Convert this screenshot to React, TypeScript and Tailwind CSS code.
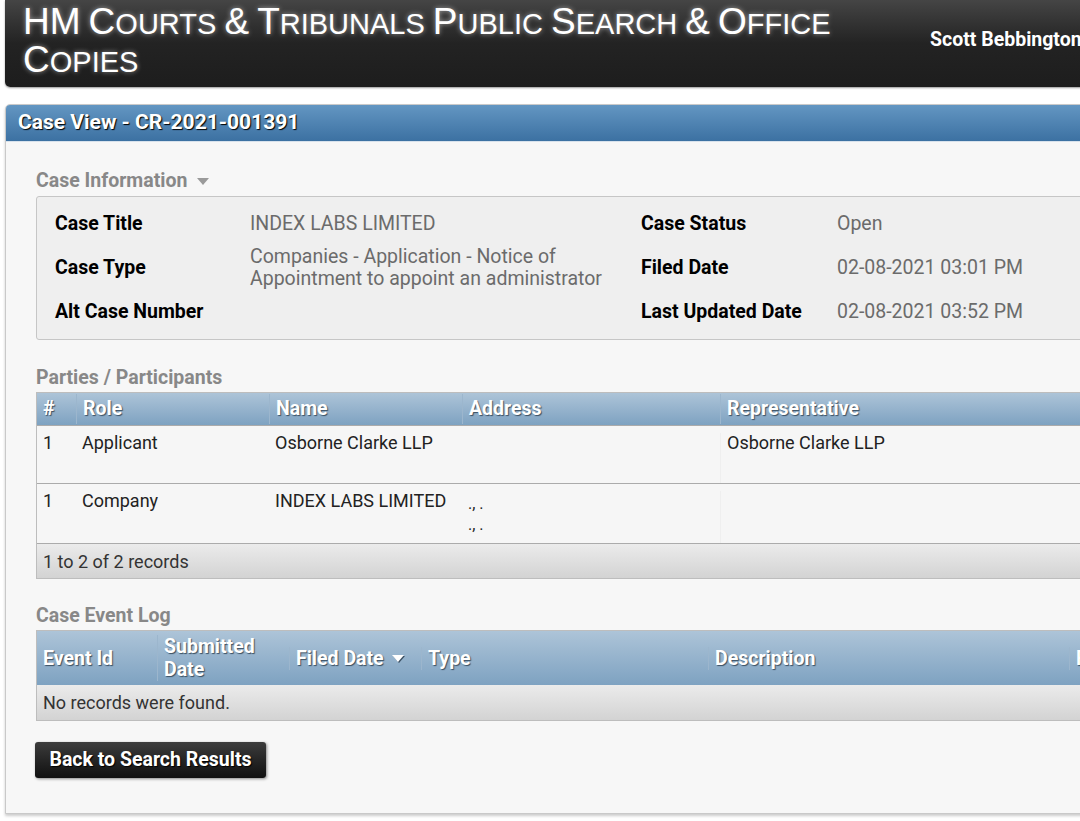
import React from 'react'

const roboto = "font-['Roboto',sans-serif]"

// banner title words, rendered in small caps by hand: first letter big, rest smaller
const titleWords = ['HM', 'Courts', '&', 'Tribunals', 'Public', 'Search', '&', 'Office', 'Copies']

function CapsWord({ word }: { word: string }) {
  if (word === 'HM' || word === '&') return <span className="text-[37px] leading-[35px]">{word}</span>
  return (
    <span>
      <span className="text-[37px] leading-[35px]">{word[0].toUpperCase()}</span>
      <span className="text-[29px] leading-[35px] uppercase">{word.slice(1)}</span>
    </span>
  )
}

const Caret = ({ color = '#9a9a9a' }: { color?: string }) => (
  <svg width="12" height="7" viewBox="0 0 12 7" className="inline-block">
    <path d="M0 0 L12 0 L6 7 Z" fill={color} />
  </svg>
)

const thCls =
  "text-white font-bold text-[19.5px] [text-shadow:1px_1px_1px_#3a4f62] px-[6px] border-l border-[#9cb6cd] first:border-l-0 whitespace-nowrap"

const parties = [
  { n: '1', role: 'Applicant', name: 'Osborne Clarke LLP', address: [] as string[], rep: 'Osborne Clarke LLP', h: 'h-[58px]' },
  { n: '1', role: 'Company', name: 'INDEX LABS LIMITED', address: ['., .', '., .'], rep: '', h: 'h-[60px]' },
]

function InfoRow({ label, value, label2, value2 }: { label: string; value: React.ReactNode; label2: string; value2: string }) {
  return (
    <div className="grid grid-cols-[195px_391px_196px_1fr] items-center">
      <div className="font-bold text-black">{label}</div>
      <div className="text-[#6b6b6b] leading-[22px]">{value}</div>
      <div className="font-bold text-black">{label2}</div>
      <div className="text-[#6b6b6b]">{value2}</div>
    </div>
  )
}

export default function App() {
  return (
    <div className={`w-[1080px] h-[821px] overflow-hidden bg-white ${roboto}`}>
      <div className="w-[1220px] pl-[5px]">
        {/* top banner */}
        <header className="h-[87px] rounded-bl-[5px] bg-gradient-to-b from-[#454545] via-[#232323] to-[#1d1d1d] shadow-[0_1px_2px_rgba(0,0,0,0.4)] flex">
          <h1 className="w-[900px] pl-[18px] pt-[4px] font-['Liberation_Sans',Arial,sans-serif] text-white text-[29px] leading-[35px] [text-shadow:0_0_5px_rgba(255,255,255,0.55)] font-normal">
            {titleWords.map((w, i) => (
              <React.Fragment key={i}>
                <CapsWord word={w} />
                {i < titleWords.length - 1 ? ' ' : ''}
              </React.Fragment>
            ))}
          </h1>
          <div className="pl-[25px] pt-[25px] text-white font-bold text-[19.5px] whitespace-nowrap">Scott Bebbington</div>
        </header>

        {/* case panel */}
        <section className="mt-[17px] border border-[#c9c9c9] rounded-t-[5px] bg-[#f7f7f7] shadow-[0_2px_3px_rgba(0,0,0,0.2)]">
          <div className="h-[37px] rounded-t-[4px] bg-gradient-to-b from-[#6396c2] to-[#3c71a2] border-b border-[#d8e2ec] flex items-center pl-[12px] text-white font-bold text-[21px] [text-shadow:1px_1px_1px_#000]">
            Case View - CR-2021-001391
          </div>

          <div className="px-[30px] pt-[27px] pb-[35px] text-[19.5px]">
            <h2 className="flex items-center gap-[10px] text-[#888] font-bold text-[19.5px] leading-[24px]">
              Case Information <Caret />
            </h2>

            <div className="mt-[3px] border border-[#c6c6c6] rounded-[3px] bg-[#efefef] pl-[18px] pt-[16px] pb-[16px] flex flex-col gap-[11px] leading-[22px]">
              <InfoRow label="Case Title" value="INDEX LABS LIMITED" label2="Case Status" value2="Open" />
              <InfoRow
                label="Case Type"
                value={<>Companies - Application - Notice of<br />Appointment to appoint an administrator</>}
                label2="Filed Date"
                value2="02-08-2021 03:01 PM"
              />
              <InfoRow label="Alt Case Number" value="" label2="Last Updated Date" value2="02-08-2021 03:52 PM" />
            </div>

            <h2 className="mt-[27px] text-[#888] font-bold text-[19.5px] leading-[22px]">Parties / Participants</h2>
            <div className="mt-[3px] border border-[#bdbdbd] text-[18px] text-[#222]">
              <div className="h-[32px] grid grid-cols-[39px_193px_193px_258px_1fr] items-center bg-gradient-to-b from-[#adc4d8] to-[#7ea2c1]">
                <div className={thCls}>#</div>
                <div className={thCls}>Role</div>
                <div className={thCls}>Name</div>
                <div className={thCls}>Address</div>
                <div className={thCls}>Representative</div>
              </div>
              {parties.map((p, i) => (
                <div key={i} className={`${p.h} grid grid-cols-[39px_193px_193px_258px_1fr] border-t border-[#ababab] first-of-type:border-t-0 bg-[#f6f6f6] leading-[20px] pt-[7px]`}>
                  <div className="px-[6px]">{p.n}</div>
                  <div className="px-[6px]">{p.role}</div>
                  <div className="px-[6px]">{p.name}</div>
                  <div className="px-[6px] text-[16px] leading-[21px] pt-[2px]">
                    {p.address.map((a, j) => <div key={j}>{a}</div>)}
                  </div>
                  <div className="px-[6px] border-l border-[#efefef]">{p.rep}</div>
                </div>
              ))}
              <div className="h-[35px] border-t border-[#ababab] bg-gradient-to-b from-[#ebebeb] to-[#d3d3d3] flex items-center px-[6px] text-[#333]">
                1 to 2 of 2 records
              </div>
            </div>

            <h2 className="mt-[26px] text-[#888] font-bold text-[19.5px] leading-[22px]">Case Event Log</h2>
            <div className="mt-[3px] border border-[#bdbdbd] text-[18px] text-[#222]">
              <div className="h-[54px] grid grid-cols-[120px_132px_132px_287px_361px_1fr] items-center bg-gradient-to-b from-[#adc4d8] to-[#7ea2c1] leading-[23px]">
                <div className={thCls}>Event Id</div>
                <div className={thCls}>Submitted<br />Date</div>
                <div className={`${thCls} flex items-center gap-[8px]`}>
                  Filed Date
                  <span className="[filter:drop-shadow(1px_1px_0_#3a4f62)] flex"><Caret color="#fff" /></span>
                </div>
                <div className={thCls}>Type</div>
                <div className={thCls}>Description</div>
                <div className={thCls}>Filed By</div>
              </div>
              <div className="h-[35px] bg-gradient-to-b from-[#ebebeb] to-[#d3d3d3] flex items-center px-[6px] text-[#333]">
                No records were found.
              </div>
            </div>

            <button className="mt-[21px] -ml-[1px] h-[36px] w-[231px] rounded-[3px] bg-gradient-to-b from-[#3c3c3c] to-[#111] text-white font-bold text-[19.5px] shadow-[1px_1px_3px_rgba(0,0,0,0.45)] [text-shadow:1px_1px_1px_#000]">
              Back to Search Results
            </button>
          </div>
        </section>
      </div>
    </div>
  )
}
